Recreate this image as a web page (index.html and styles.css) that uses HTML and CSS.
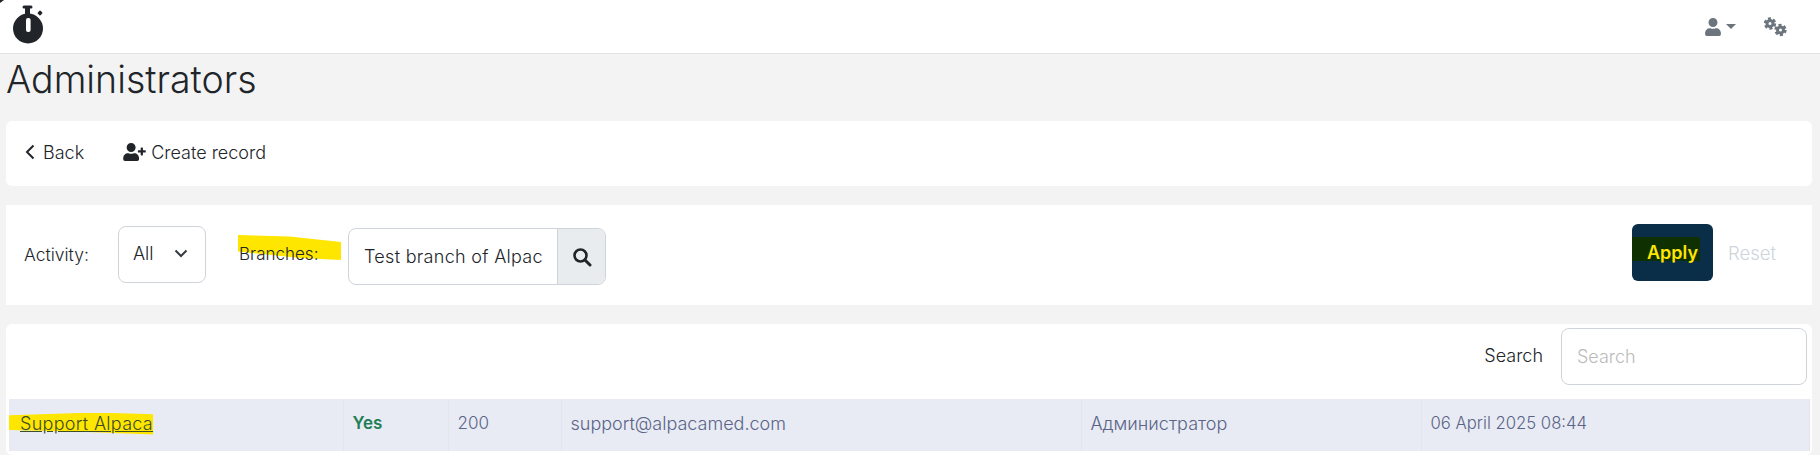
FILE: index.html
```html
<!DOCTYPE html>
<html lang="en">
<head>
  <meta charset="UTF-8" />
  <title>Administrators</title>
  <link rel="stylesheet" href="styles.css">
</head>
<body>
  <div class="topbar">
    <svg class="logo" viewBox="0 0 34 40" width="34" height="40">
      <rect x="11.5" y="0.5" width="10" height="3" rx="1.5" fill="#212529"/>
      <rect x="14" y="3" width="5" height="6" fill="#212529"/>
      <rect x="27" y="6" width="4" height="4" rx="1" fill="#212529" transform="rotate(42 29 8)"/>
      <circle cx="17" cy="23.5" r="15" fill="#212529"/>
      <rect x="15" y="13" width="4.6" height="14" rx="2" fill="#fff"/>
    </svg>
    <div class="topbar-icons">
      <div class="user-menu">
        <svg viewBox="0 0 448 512" width="16" height="18"><path fill="#6c757d" d="M224 256c70.7 0 128-57.3 128-128S294.7 0 224 0 96 57.3 96 128s57.3 128 128 128zm89.6 32h-16.7c-22.2 10.2-46.9 16-72.9 16s-50.6-5.8-72.9-16h-16.7C60.2 288 0 348.2 0 422.4V464c0 26.5 21.5 48 48 48h352c26.5 0 48-21.5 48-48v-41.6c0-74.2-60.2-134.4-134.4-134.4z"/></svg>
        <span class="caret"></span>
      </div>
      <svg class="cogs" viewBox="0 0 24 20" width="24" height="20">
        <g fill="none" stroke="#6c757d">
          <circle cx="7" cy="6.5" r="3" stroke-width="3"/>
          <circle cx="7" cy="6.5" r="5" stroke-width="2.4" stroke-dasharray="3 2.24"/>
          <circle cx="17.5" cy="13" r="3" stroke-width="3"/>
          <circle cx="17.5" cy="13" r="5" stroke-width="2.4" stroke-dasharray="3 2.24"/>
        </g>
      </svg>
    </div>
  </div>

  <div class="main">
    <h1>Administrators</h1>

    <div class="card actions">
      <a class="action">
        <svg viewBox="0 0 10 16" width="10" height="16"><path d="M8.5 1.5 2 8l6.5 6.5" fill="none" stroke="#212529" stroke-width="2"/></svg>
        Back
      </a>
      <a class="action">
        <svg viewBox="0 0 640 512" width="23" height="18"><path fill="#212529" d="M624 208h-64v-64c0-8.8-7.2-16-16-16h-32c-8.8 0-16 7.2-16 16v64h-64c-8.8 0-16 7.2-16 16v32c0 8.8 7.2 16 16 16h64v64c0 8.8 7.2 16 16 16h32c8.8 0 16-7.2 16-16v-64h64c8.8 0 16-7.2 16-16v-32c0-8.8-7.2-16-16-16zm-400 48c70.7 0 128-57.3 128-128S294.7 0 224 0 96 57.3 96 128s57.3 128 128 128zm89.6 32h-16.7c-22.2 10.2-46.9 16-72.9 16s-50.6-5.8-72.9-16h-16.7C60.2 288 0 348.2 0 422.4V464c0 26.5 21.5 48 48 48h352c26.5 0 48-21.5 48-48v-41.6c0-74.2-60.2-134.4-134.4-134.4z"/></svg>
        Create record
      </a>
    </div>

    <div class="card filters">
      <label class="activity-label">Activity:</label>
      <div class="select-box">
        <span>All</span>
        <svg viewBox="0 0 14 9" width="14" height="9"><path d="M1.5 1.5 7 7l5.5-5.5" fill="none" stroke="#343a40" stroke-width="2"/></svg>
      </div>
      <label class="branches-label"><span class="marker marker-branches"></span><span class="marker-text">Branches:</span></label>
      <div class="input-group">
        <div class="input-value">Test branch of Alpac</div>
        <div class="input-btn">
          <svg viewBox="0 0 20 20" width="20" height="20"><circle cx="8.5" cy="8.5" r="6" fill="none" stroke="#212529" stroke-width="2.6"/><path d="m13 13 5 5" stroke="#212529" stroke-width="3" stroke-linecap="round"/></svg>
        </div>
      </div>
      <div class="filter-buttons">
        <button class="btn-apply"><span class="marker marker-apply"></span><span class="marker-text">Apply</span></button>
        <span class="btn-reset">Reset</span>
      </div>
    </div>

    <div class="card table-card">
      <div class="table-search">
        <label>Search</label>
        <input type="text" placeholder="Search"/>
      </div>
      <table>
        <colgroup>
          <col class="col-name"><col class="col-active"><col class="col-code">
          <col class="col-email"><col class="col-role"><col class="col-date">
        </colgroup>
        <tbody>
          <tr>
            <td><a class="name-link"><span class="marker marker-name"></span><span class="marker-text">Support Alpaca</span></a></td>
            <td class="yes">Yes</td>
            <td class="code">200</td>
            <td>support@alpacamed.com</td>
            <td>Администратор</td>
            <td class="date">06 April 2025 08:44</td>
          </tr>
        </tbody>
      </table>
    </div>
  </div>
</body>
</html>
```

FILE: styles.css
```css
* {
  margin: 0;
  padding: 0;
  box-sizing: border-box;
}

html, body {
  height: 100%;
  overflow: hidden;
  font-family: 'Inter', sans-serif;
  font-weight: 300;
  font-size: 17px;
  color: #212529;
  background: #f3f3f4;
}

/* Top bar */
.topbar {
  height: 54px;
  background: #fff;
  border-bottom: 1px solid #e2e2e2;
  display: flex;
  align-items: center;
  justify-content: space-between;
  padding: 0 0 0 11px;
  position: relative;
}

/* dark scrap left in the corner of the capture */
.topbar::before {
  content: "";
  position: absolute;
  left: 0;
  top: 0;
  border-top: 3px solid #212529;
  border-right: 4px solid transparent;
}

.logo {
  align-self: flex-start;
  margin-top: 5px;
}

.topbar-icons {
  display: flex;
  align-items: center;
  gap: 27px;
  padding-right: 33px;
}

.user-menu {
  display: flex;
  align-items: center;
  gap: 5px;
}

.caret {
  width: 0;
  height: 0;
  border-left: 5px solid transparent;
  border-right: 5px solid transparent;
  border-top: 5px solid #6c757d;
}

/* Main */
.main {
  padding: 0 8px 0 6px;
}

h1 {
  font-size: 37.5px;
  font-weight: 300;
  line-height: 46px;
  padding-top: 3px;
  margin-bottom: 18px;
}

.card {
  background: #fff;
  border-radius: 6px;
  margin-bottom: 19px;
}

.actions {
  height: 65px;
  display: flex;
  align-items: center;
  gap: 37px;
  padding: 0 0 3px 19px;
  font-size: 18px;
}

.action {
  display: flex;
  align-items: center;
  gap: 5px;
}

.action:first-child {
  gap: 8px;
}

.action:last-child {
  margin-left: 2px;
}

/* Filters */
.filters {
  height: 100px;
  border-radius: 0;
  display: flex;
  align-items: center;
  padding: 0 19px 0 18px;
}

.activity-label {
  width: 94px;
  font-size: 17.5px;
  margin-bottom: 2px;
}

.select-box {
  width: 88px;
  height: 57px;
  border: 1px solid #ced4da;
  border-radius: 8px;
  display: flex;
  align-items: center;
  justify-content: space-between;
  padding: 0 17px 2px 14px;
  margin-right: 33px;
  margin-bottom: 2px;
  font-size: 18px;
}

.branches-label {
  width: 109px;
  position: relative;
  margin-bottom: 2px;
}

.marker {
  position: absolute;
  display: block;
}

.marker-text {
  position: relative;
}

.marker-branches {
  left: -1px;
  top: -9px;
  width: 103px;
  height: 25px;
  background: #ffe600;
  clip-path: polygon(0 0, 50% 6%, 100% 28%, 100% 100%, 60% 92%, 0 66%);
}

.input-group {
  width: 258px;
  height: 57px;
  margin-top: 3px;
  border: 1px solid #ced4da;
  border-radius: 8px;
  display: flex;
  overflow: hidden;
}

.input-value {
  flex: 1;
  padding-left: 15px;
  display: flex;
  align-items: center;
  white-space: nowrap;
  overflow: hidden;
  font-size: 18px;
  letter-spacing: 0.3px;
}

.input-btn {
  width: 48px;
  flex-shrink: 0;
  background: #e9ecef;
  border-left: 1px solid #ced4da;
  display: flex;
  align-items: center;
  justify-content: center;
}

.filter-buttons {
  margin-left: auto;
  margin-bottom: 5px;
  display: flex;
  align-items: center;
  gap: 15px;
}

.btn-apply {
  width: 81px;
  height: 57px;
  border: none;
  border-radius: 6px;
  background: #0a2e47;
  color: #ffe600;
  font-family: inherit;
  font-weight: 600;
  font-size: 18px;
  position: relative;
}

.marker-apply {
  left: 0;
  top: 13px;
  width: 68px;
  height: 24px;
  background: #0f3000;
}

.btn-reset {
  color: #ced4da;
  width: 65px;
  font-size: 18.5px;
}

/* Table */
.table-card {
  height: 131px;
  padding: 4px 5px 0 3px;
}

.table-search {
  height: 71px;
  display: flex;
  align-items: flex-start;
  justify-content: flex-end;
  gap: 18px;
}

.table-search label {
  line-height: 55px;
  font-size: 18px;
}

.table-search input {
  width: 246px;
  height: 57px;
  border: 1px solid #ced4da;
  border-radius: 8px;
  padding-left: 15px;
  font-family: inherit;
  font-weight: 300;
  font-size: 18px;
}

.table-search input::placeholder {
  color: #bbb;
}

table {
  width: 1800px;
  border-collapse: collapse;
  table-layout: fixed;
  background: #e8ebf3;
  color: #5a6488;
  font-size: 18px;
}

td {
  height: 52px;
  padding: 0 9px 4px;
  border-right: 1px solid #e2e5ed;
  white-space: nowrap;
}

.col-name { width: 334px; }
.col-active { width: 105px; }
.col-code { width: 113px; }
.col-email { width: 520px; }
.col-role { width: 340px; }
.col-date { width: 388px; }

.name-link {
  position: relative;
  color: #3d4d2a;
  text-decoration: underline;
  padding-left: 2px;
  letter-spacing: 0.3px;
}

.marker-name {
  left: -9px;
  top: 0;
  width: 144px;
  height: 22px;
  background: #ffe600;
  clip-path: polygon(0 12%, 60% 0, 100% 8%, 100% 100%, 50% 88%, 0 80%);
}

.yes {
  color: #1e7f55;
  font-weight: 600;
  font-size: 17px;
}

.code {
  font-size: 17px;
}

.date {
  font-size: 16.7px;
}
```
